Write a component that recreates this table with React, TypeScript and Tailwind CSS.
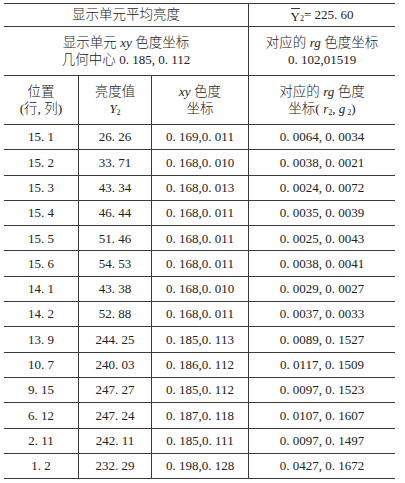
import React from "react";

const rows: [string, string, string, string][] = [
  ["15. 1", "26. 26", "0. 169,0. 011", "0. 0064, 0. 0034"],
  ["15. 2", "33. 71", "0. 168,0. 010", "0. 0038, 0. 0021"],
  ["15. 3", "43. 34", "0. 168,0. 013", "0. 0024, 0. 0072"],
  ["15. 4", "46. 44", "0. 168,0. 011", "0. 0035, 0. 0039"],
  ["15. 5", "51. 46", "0. 168,0. 011", "0. 0025, 0. 0043"],
  ["15. 6", "54. 53", "0. 168,0. 011", "0. 0038, 0. 0041"],
  ["14. 1", "43. 38", "0. 168,0. 010", "0. 0029, 0. 0027"],
  ["14. 2", "52. 88", "0. 168,0. 011", "0. 0037, 0. 0033"],
  ["13. 9", "244. 25", "0. 185,0. 113", "0. 0089, 0. 1527"],
  ["10. 7", "240. 03", "0. 186,0. 112", "0. 0117, 0. 1509"],
  ["9. 15", "247. 27", "0. 185,0. 112", "0. 0097, 0. 1523"],
  ["6. 12", "247. 24", "0. 187,0. 118", "0. 0107, 0. 1607"],
  ["2. 11", "242. 11", "0. 185,0. 111", "0. 0097, 0. 1497"],
  ["1. 2", "232. 29", "0. 198,0. 128", "0. 0427, 0. 1672"],
];

const font = {
  fontFamily: "'Liberation Serif', 'Noto Sans CJK SC', serif",
};

export default function App() {
  return (
    <div className="bg-white w-[405px] h-[483px] pt-[3px] pl-[4px]" style={font}>
      <div className="w-[391px] border-t border-[#3a3a3a] text-[#222] text-[13px] font-light">
        {/* Row 1 */}
        <div className="flex h-[23px] border-b border-[#3a3a3a]">
          <div className="w-[244px] flex items-center justify-center text-[13.5px]">
            显示单元平均亮度
          </div>
          <div className="flex-1 border-l border-[#3a3a3a] flex items-center justify-center">
            <span className="inline-block leading-none border-t border-[#3a3a3a] pt-[1px]">Y</span>
            <span className="text-[8px] relative top-[4px]">2</span>
            <span>= 225. 60</span>
          </div>
        </div>
        {/* Row 2 */}
        <div className="flex h-[49px] border-b border-[#3a3a3a]">
          <div className="w-[244px] flex flex-col items-center justify-center leading-[17px] text-[13.5px]">
            <div>
              显示单元 <i className="text-[13px]">xy</i> 色度坐标
            </div>
            <div>
              几何中心 <span className="text-[13px]">0. 185, 0. 112</span>
            </div>
          </div>
          <div className="flex-1 border-l border-[#3a3a3a] flex flex-col items-center justify-center leading-[17px] text-[13.5px]">
            <div>
              对应的 <i className="text-[13px]">rg</i> 色度坐标
            </div>
            <div className="text-[13px]">0. 102,01519</div>
          </div>
        </div>
        {/* Row 3 */}
        <div className="flex h-[49px] border-b border-[#3a3a3a] text-[13.5px] leading-[17px]">
          <div className="w-[74px] flex flex-col items-center justify-center">
            <div>位置</div>
            <div>(行, 列)</div>
          </div>
          <div className="w-[73px] border-l border-[#3a3a3a] flex flex-col items-center justify-center">
            <div>亮度值</div>
            <div>
              <i className="text-[13px]">Y</i>
              <sub className="text-[8px]">2</sub>
            </div>
          </div>
          <div className="w-[97px] border-l border-[#3a3a3a] flex flex-col items-center justify-center">
            <div>
              <i className="text-[13px]">xy</i> 色度
            </div>
            <div>坐标</div>
          </div>
          <div className="flex-1 border-l border-[#3a3a3a] flex flex-col items-center justify-center">
            <div>
              对应的 <i className="text-[13px]">rg</i> 色度
            </div>
            <div>
              坐标( <i className="text-[13px]">r</i>
              <sub className="text-[8px]">2</sub>
              <span className="text-[13px]">, </span>
              <i className="text-[13px]">g</i>
              <sub className="text-[8px]"> 2</sub>
              <span className="text-[13px]">)</span>
            </div>
          </div>
        </div>
        {/* Data rows */}
        {rows.map((r, i) => (
          <div key={i} className="flex h-[25.3px] border-b border-[#3a3a3a]">
            <div className="w-[74px] flex items-center justify-center">{r[0]}</div>
            <div className="w-[73px] border-l border-[#3a3a3a] flex items-center justify-center">{r[1]}</div>
            <div className="w-[97px] border-l border-[#3a3a3a] flex items-center justify-center">{r[2]}</div>
            <div className="flex-1 border-l border-[#3a3a3a] flex items-center justify-center">{r[3]}</div>
          </div>
        ))}
      </div>
    </div>
  );
}
